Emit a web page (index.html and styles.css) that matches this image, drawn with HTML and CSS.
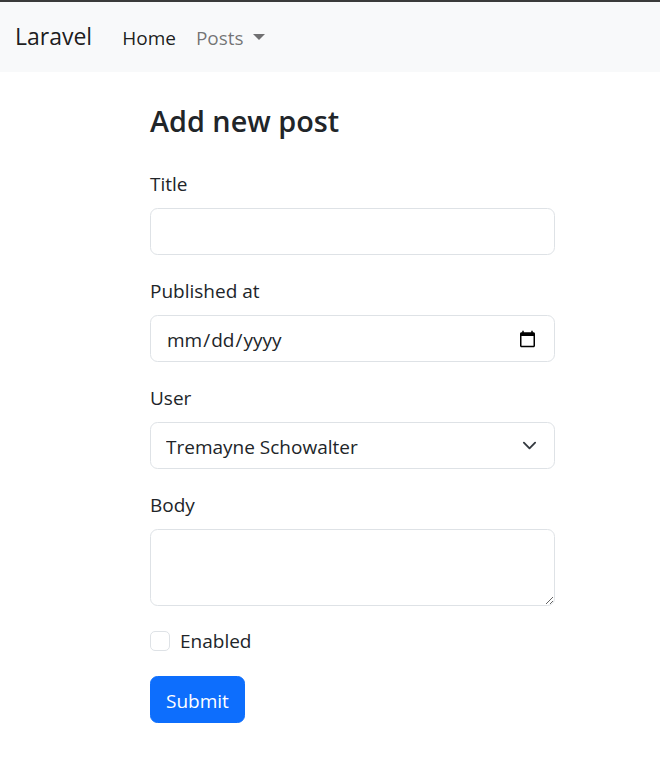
FILE: index.html
```html
<!DOCTYPE html>
<html lang="en">
<head>
<meta charset="utf-8">
<title>Add new post</title>
<link rel="stylesheet" href="styles.css">
</head>
<body>
<nav class="navbar">
  <a class="brand" href="#">Laravel</a>
  <ul class="nav">
    <li><a class="nav-link active" href="#">Home</a></li>
    <li><a class="nav-link" href="#">Posts<span class="caret"></span></a></li>
  </ul>
</nav>
<main class="page">
  <form class="post-form">
    <h1 class="title">Add new post</h1>
    <div class="field">
      <label class="label" for="title">Title</label>
      <input class="control" id="title" type="text">
    </div>
    <div class="field">
      <label class="label" for="published">Published at</label>
      <input class="control" id="published" type="date">
    </div>
    <div class="field">
      <label class="label" for="user">User</label>
      <div class="select-wrap">
        <select class="control select" id="user">
          <option>Tremayne Schowalter</option>
        </select>
        <svg class="chevron" viewBox="0 0 16 16" width="15" height="15"><path d="m2 5 6 6 6-6" fill="none" stroke="#343a40" stroke-width="2" stroke-linecap="round" stroke-linejoin="round"/></svg>
      </div>
    </div>
    <div class="field">
      <label class="label" for="body">Body</label>
      <textarea class="control textarea" id="body" rows="2"></textarea>
    </div>
    <div class="check">
      <input class="check-input" id="enabled" type="checkbox">
      <label class="check-label" for="enabled">Enabled</label>
    </div>
    <button class="btn" type="submit">Submit</button>
  </form>
</main>
</body>
</html>
```
FILE: styles.css
```css
html, body {
  margin: 0;
}
body {
  font-family: "Open Sans", "Noto Sans", sans-serif;
  font-size: 19px;
  line-height: 30px;
  color: #212529;
  background: #fff;
  border-top: 2px solid #3a3a3a;
}
.navbar {
  display: flex;
  align-items: center;
  padding: 10px 15px;
  background: #f8f9fa;
}
.brand {
  font-size: 23px;
  line-height: 37.5px;
  padding: 6.25px 0;
  margin-right: 20px;
  color: rgba(0, 0, 0, .9);
  text-decoration: none;
}
.nav {
  display: flex;
  list-style: none;
  margin: 0;
  padding: 0;
}
.nav-link {
  display: block;
  padding: 11px 10px 9px;
  color: rgba(0, 0, 0, .55);
  text-decoration: none;
}
.nav-link.active {
  color: rgba(0, 0, 0, .9);
}
.caret {
  display: inline-block;
  margin-left: 9px;
  vertical-align: 5px;
  border-top: 6px solid;
  border-left: 6px solid transparent;
  border-right: 6px solid transparent;
}
.page {
  padding: 30px 0 0 150px;
}
.post-form {
  width: 405px;
}
.title {
  font-size: 28.8px;
  font-weight: 600;
  line-height: 36px;
  margin: 0 0 29px;
  padding-top: 1px;
  color: #212529;
}
.field {
  margin-bottom: 20px;
}
.label {
  display: block;
  padding-top: 1px;
  margin-bottom: 9px;
}
.control {
  display: block;
  box-sizing: border-box;
  width: 100%;
  height: 47px;
  margin: 0;
  padding: 8.5px 15px 6.5px;
  font: inherit;
  color: #212529;
  background: #fff;
  border: 1px solid #dee2e6;
  border-radius: 7.5px;
  outline: none;
}
.select-wrap {
  position: relative;
}
.select {
  appearance: none;
  -webkit-appearance: none;
  padding-right: 45px;
}
.chevron {
  position: absolute;
  right: 18.5px;
  top: 16px;
  pointer-events: none;
}
.textarea {
  height: 77px;
  resize: vertical;
}
.check {
  display: flex;
  align-items: flex-start;
  gap: 10px;
  height: 30px;
  margin-bottom: 20px;
}
.check-input {
  appearance: none;
  -webkit-appearance: none;
  width: 20px;
  height: 20px;
  margin: 5px 0 0;
  border: 1px solid #dee2e6;
  border-radius: 5px;
  background: #fff;
  box-sizing: border-box;
}
.check-label {
  padding-top: 1px;
  line-height: 29px;
}
.btn {
  font: inherit;
  color: #fff;
  background: #0d6efd;
  border: 1px solid #0d6efd;
  border-radius: 7.5px;
  padding: 8.5px 15px 6.5px;
  line-height: 30px;
}
```
